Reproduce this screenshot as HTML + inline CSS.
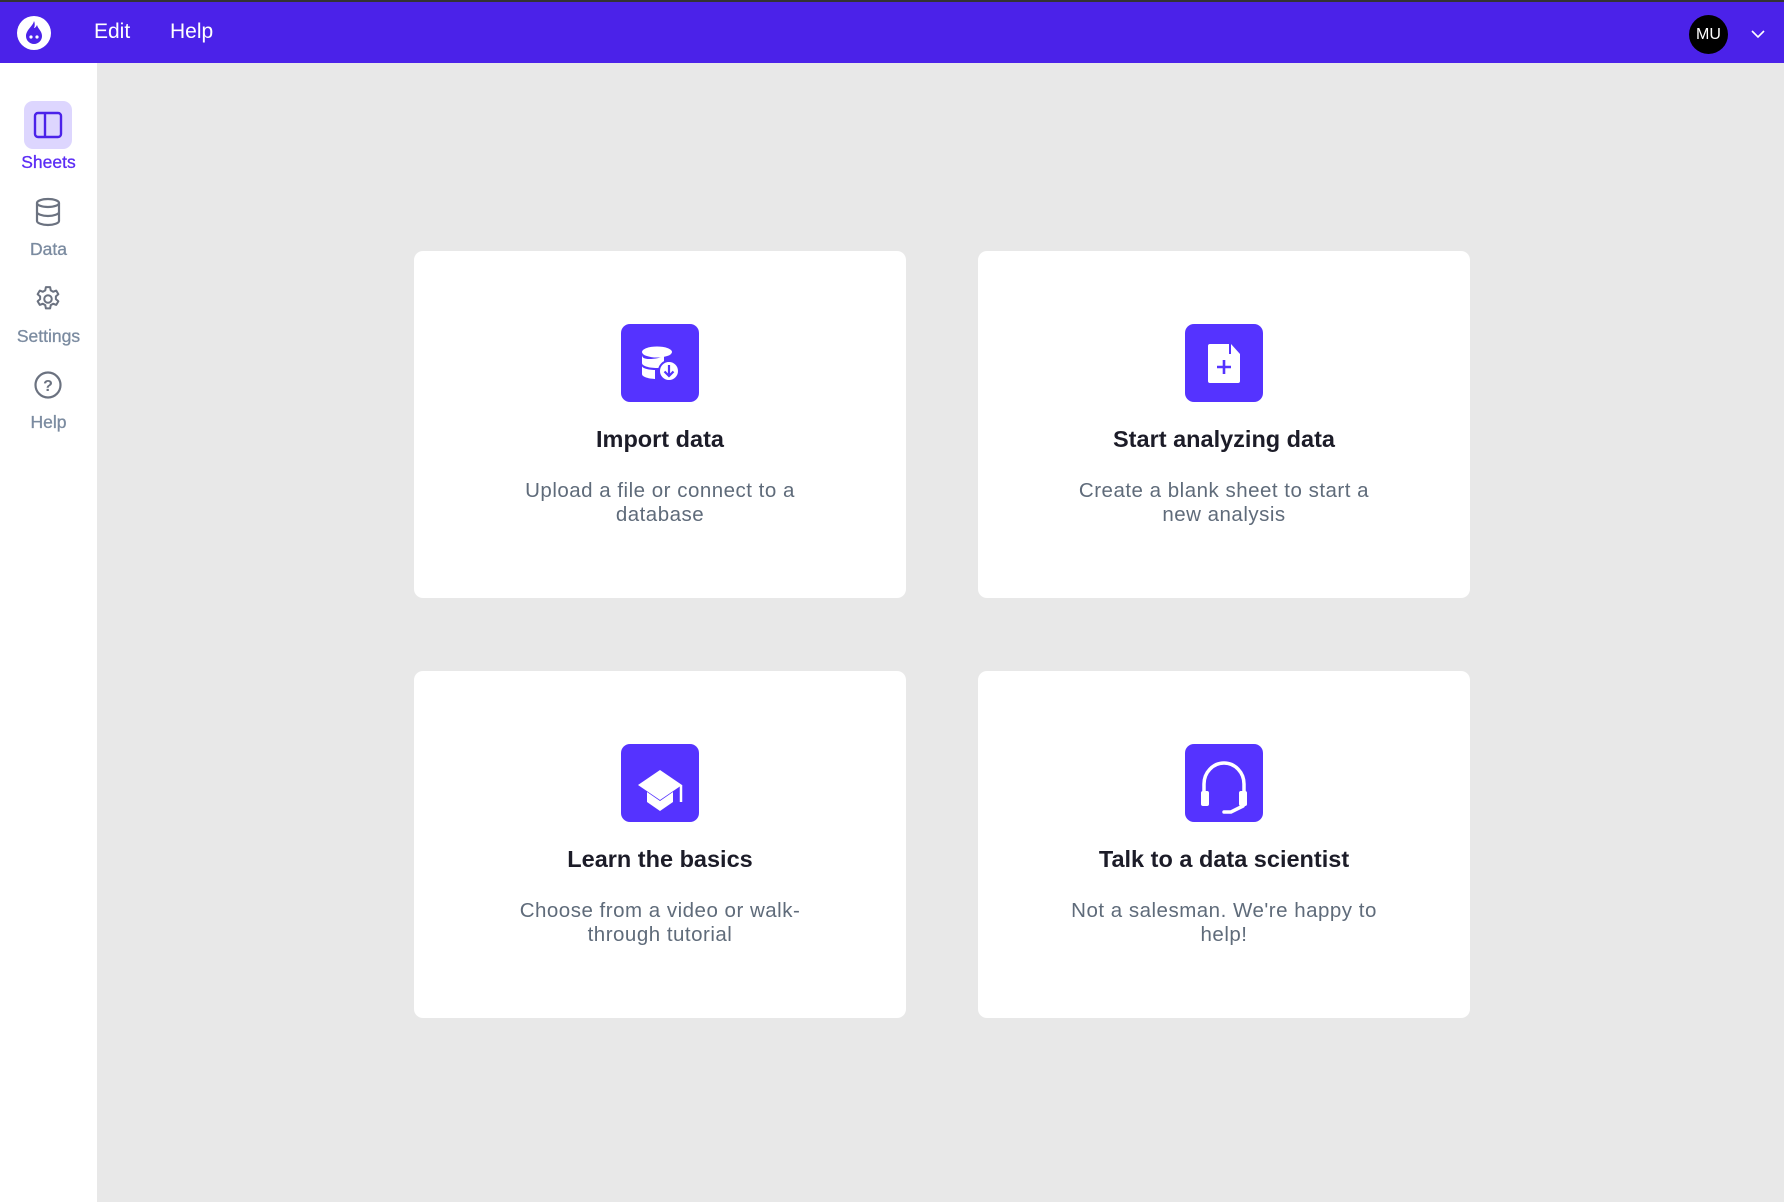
<!DOCTYPE html>
<html><head><meta charset="utf-8"><style>
*{margin:0;padding:0;box-sizing:border-box}
body{width:1784px;height:1202px;background:#e8e8e8;font-family:"Liberation Sans",sans-serif;position:relative;overflow:hidden}
.hdr{position:absolute;left:0;top:0;width:1784px;height:63px;background:#4b22e9;border-top:2px solid #333}
.hdr .m{position:absolute;top:18px;color:#fff;font-size:21px}
.side{position:absolute;left:0;top:63px;width:97px;height:1139px;background:#fff}
.it{position:absolute;left:0;width:97px;text-align:center;font-size:17.5px;color:#7b8ba0;font-weight:500;-webkit-text-stroke:0.3px}
.card{position:absolute;width:492px;height:347px;background:#fff;border-radius:9px;text-align:center}
.ib{position:absolute;left:207px;top:73px;width:78px;height:78px;background:#5533ff;border-radius:9px}
.ib svg{position:absolute;left:0;top:0}
.t{position:absolute;left:0;right:0;top:175px;font-size:23.5px;font-weight:bold;color:#1c1c28}
.d{position:absolute;left:80px;right:80px;top:228px;font-size:20.5px;line-height:24px;color:#5f6b7a;letter-spacing:0.5px}
</style></head><body>
<div class="hdr">
<svg style="position:absolute;left:15px;top:12px" width="38" height="38" viewBox="0 0 38 38"><circle cx="19" cy="19" r="17" fill="#fff"/><path d="M19 7c-1 5-8 9-8 15a8 8 0 0 0 16 0c0-5-4-7-5-11-1 2-2 3-3 3 1-2 1-5 0-7z" fill="#4b22e9"/><circle cx="16" cy="23" r="1.6" fill="#fff"/><circle cx="22" cy="23" r="1.6" fill="#fff"/></svg>
<div class="m" style="left:94px">Edit</div>
<div class="m" style="left:170px">Help</div>
<div style="position:absolute;left:1689px;top:13px;width:39px;height:39px;border-radius:50%;background:#000;color:#fff;font-size:16px;line-height:39px;text-align:center">MU</div>
<svg style="position:absolute;left:1750px;top:27px" width="16" height="10" viewBox="0 0 16 10"><path d="M2 2l6 6 6-6" stroke="#fff" stroke-width="1.6" fill="none"/></svg>
</div>
<div class="side">
<div style="position:absolute;left:24px;top:38px;width:48px;height:48px;border-radius:9px;background:#ddd6fe"></div>
<svg style="position:absolute;left:33px;top:48px" width="30" height="28" viewBox="0 0 30 28"><rect x="2" y="2" width="26" height="24" rx="3" stroke="#4b22e9" stroke-width="2.4" fill="none"/><line x1="12" y1="2" x2="12" y2="26" stroke="#4b22e9" stroke-width="2.4"/></svg>
<div class="it" style="top:89px;color:#5b2cf5">Sheets</div>
<svg style="position:absolute;left:34px;top:134px" width="28" height="30" viewBox="0 0 28 30"><ellipse cx="14" cy="6" rx="11" ry="4" stroke="#6b7280" stroke-width="2.2" fill="none"/><path d="M3 6v18c0 2 5 4 11 4s11-2 11-4V6M3 15c0 2 5 4 11 4s11-2 11-4" stroke="#6b7280" stroke-width="2.2" fill="none"/></svg>
<div class="it" style="top:176px">Data</div>
<svg style="position:absolute;left:33px;top:221px" width="30" height="30" viewBox="0 0 24 24"><path d="M10.3 2.5h3.4l.5 2.6 1.9 1.1 2.5-.9 1.7 2.9-2 1.7v2.2l2 1.7-1.7 2.9-2.5-.9-1.9 1.1-.5 2.6h-3.4l-.5-2.6-1.9-1.1-2.5.9-1.7-2.9 2-1.7v-2.2l-2-1.7 1.7-2.9 2.5.9 1.9-1.1z" stroke="#6b7280" stroke-width="1.6" fill="none" stroke-linejoin="round"/><circle cx="12" cy="12" r="3" stroke="#6b7280" stroke-width="1.6" fill="none"/></svg>
<div class="it" style="top:263px">Settings</div>
<svg style="position:absolute;left:33px;top:307px" width="30" height="30" viewBox="0 0 30 30"><circle cx="15" cy="15" r="12.5" stroke="#6b7280" stroke-width="2.2" fill="none"/><text x="15" y="21" text-anchor="middle" font-size="16" font-weight="bold" fill="#6b7280" font-family="Liberation Sans">?</text></svg>
<div class="it" style="top:349px">Help</div>
</div>

<div class="card" style="left:414px;top:251px">
<div class="ib"><svg width="78" height="78" viewBox="0 0 78 78"><ellipse cx="36" cy="28" rx="15" ry="5.5" fill="#fff"/><path d="M21 31v8c0 3 7 5 15 5 3 0 5 0 7-1v-12c-2 3-9 4-15 4-4 0-7-1-7-4zM21 42v8c0 3 7 5 15 5h-2v-9c-7 0-13-2-13-4z" fill="#fff"/><circle cx="48" cy="47" r="10" fill="#fff" stroke="#5533ff" stroke-width="2"/><path d="M48 41v11M43.5 47.5l4.5 4.5 4.5-4.5" stroke="#5533ff" stroke-width="2.2" fill="none"/></svg></div>
<div class="t">Import data</div>
<div class="d">Upload a file or connect to a database</div>
</div>
<div class="card" style="left:978px;top:251px">
<div class="ib"><svg width="78" height="78" viewBox="0 0 78 78"><path d="M23 22a2 2 0 0 1 2-2h19v10h11v27a2 2 0 0 1-2 2H25a2 2 0 0 1-2-2z" fill="#fff"/><path d="M46 20l9 10h-9z" fill="#fff"/><path d="M39 36v14M32 43h14" stroke="#5533ff" stroke-width="2.6"/></svg></div>
<div class="t">Start analyzing data</div>
<div class="d">Create a blank sheet to start a new analysis</div>
</div>
<div class="card" style="left:414px;top:671px">
<div class="ib"><svg width="78" height="78" viewBox="0 0 78 78"><path d="M39 26l22 15-22 15-22-15z" fill="#fff"/><path d="M26 48v10l13 9 13-9V48l-13 9z" fill="#fff"/><path d="M60 41v17" stroke="#fff" stroke-width="2.5"/></svg></div>
<div class="t">Learn the basics</div>
<div class="d">Choose from a video or walk-through tutorial</div>
</div>
<div class="card" style="left:978px;top:671px">
<div class="ib"><svg width="78" height="78" viewBox="0 0 78 78"><path d="M19 54V40a20 21 0 0 1 40 0v14" stroke="#fff" stroke-width="3.5" fill="none"/><rect x="16" y="47" width="8" height="15" rx="2" fill="#fff"/><rect x="54" y="47" width="8" height="15" rx="2" fill="#fff"/><path d="M58 62l-12 6h-7" stroke="#fff" stroke-width="3.5" fill="none" stroke-linecap="round"/></svg></div>
<div class="t">Talk to a data scientist</div>
<div class="d">Not a salesman. We're happy to help!</div>
</div>
</body></html>
